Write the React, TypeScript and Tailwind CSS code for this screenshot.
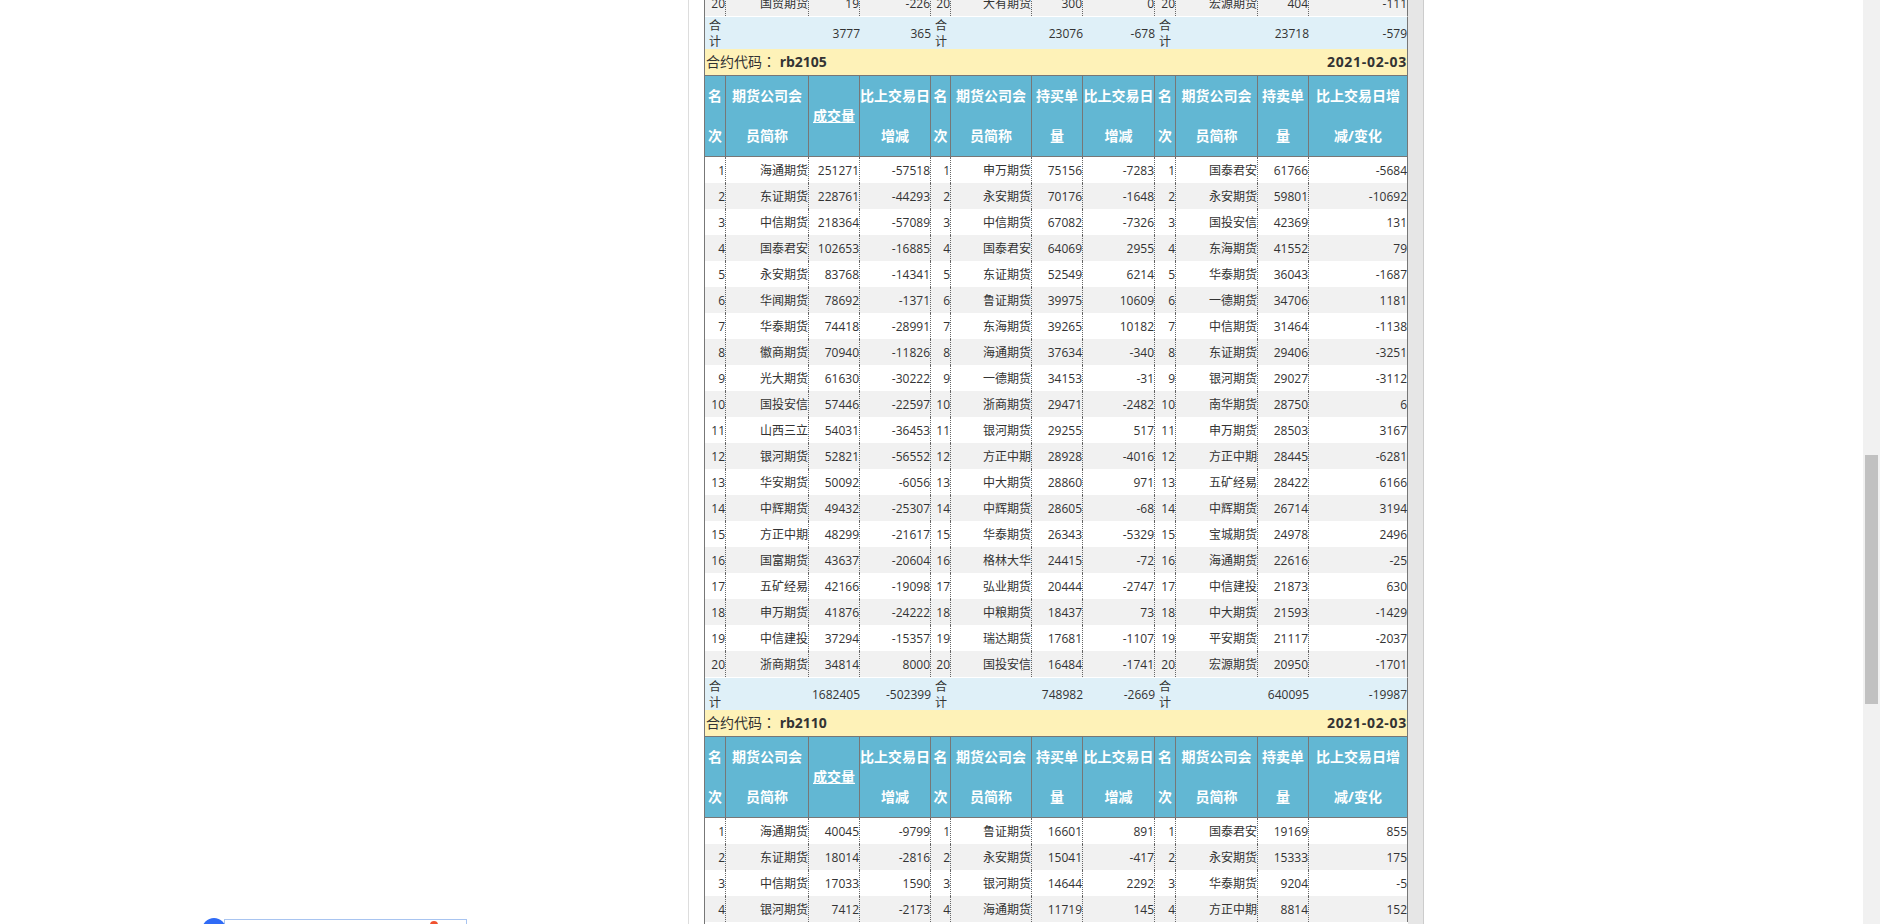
const headers = [
  ["名", "次"],
  ["期货公司会", "员简称"],
  ["成交量"],
  ["比上交易日", "增减"],
  ["名", "次"],
  ["期货公司会", "员简称"],
  ["持买单", "量"],
  ["比上交易日", "增减"],
  ["名", "次"],
  ["期货公司会", "员简称"],
  ["持卖单", "量"],
  ["比上交易日增", "减/变化"],
];

const cols = [21, 83, 51, 71, 20, 81, 51, 72, 21, 82, 51, 99];

const rb2105 = [
  "海通期货 251271 -57518 申万期货 75156 -7283 国泰君安 61766 -5684",
  "东证期货 228761 -44293 永安期货 70176 -1648 永安期货 59801 -10692",
  "中信期货 218364 -57089 中信期货 67082 -7326 国投安信 42369 131",
  "国泰君安 102653 -16885 国泰君安 64069 2955 东海期货 41552 79",
  "永安期货 83768 -14341 东证期货 52549 6214 华泰期货 36043 -1687",
  "华闻期货 78692 -1371 鲁证期货 39975 10609 一德期货 34706 1181",
  "华泰期货 74418 -28991 东海期货 39265 10182 中信期货 31464 -1138",
  "徽商期货 70940 -11826 海通期货 37634 -340 东证期货 29406 -3251",
  "光大期货 61630 -30222 一德期货 34153 -31 银河期货 29027 -3112",
  "国投安信 57446 -22597 浙商期货 29471 -2482 南华期货 28750 6",
  "山西三立 54031 -36453 银河期货 29255 517 申万期货 28503 3167",
  "银河期货 52821 -56552 方正中期 28928 -4016 方正中期 28445 -6281",
  "华安期货 50092 -6056 中大期货 28860 971 五矿经易 28422 6166",
  "中辉期货 49432 -25307 中辉期货 28605 -68 中辉期货 26714 3194",
  "方正中期 48299 -21617 华泰期货 26343 -5329 宝城期货 24978 2496",
  "国富期货 43637 -20604 格林大华 24415 -72 海通期货 22616 -25",
  "五矿经易 42166 -19098 弘业期货 20444 -2747 中信建投 21873 630",
  "申万期货 41876 -24222 中粮期货 18437 73 中大期货 21593 -1429",
  "中信建投 37294 -15357 瑞达期货 17681 -1107 平安期货 21117 -2037",
  "浙商期货 34814 8000 国投安信 16484 -1741 宏源期货 20950 -1701",
];

const rb2110 = [
  "海通期货 40045 -9799 鲁证期货 16601 891 国泰君安 19169 855",
  "东证期货 18014 -2816 永安期货 15041 -417 永安期货 15333 175",
  "中信期货 17033 1590 银河期货 14644 2292 华泰期货 9204 -5",
  "银河期货 7412 -2173 海通期货 11719 145 方正中期 8814 152",
];

function Row({ no, line }: { no: number; line: string }) {
  const v = line.split(" ");
  const cells = [no, v[0], v[1], v[2], no, v[3], v[4], v[5], no, v[6], v[7], v[8]];
  return (
    <tr className={no % 2 === 0 ? "bg-[#f1f1f1]" : "bg-white"}>
      {cells.map((c, i) => (
        <td
          key={i}
          className={
            i === 11
              ? "h-[26px] p-0 pt-[1px] text-right border-r border-solid border-[#777777]"
              : "h-[26px] p-0 pt-[1px] text-right border-r border-dotted border-[#666666]"
          }
        >
          {c}
        </td>
      ))}
    </tr>
  );
}

function Total({ values }: { values: string[] }) {
  const Label = () => (
    <td className="p-0 pl-[4px] pt-[1px] text-left leading-[15.5px] border-t border-white">合计</td>
  );
  const Num = ({ v }: { v: string }) => (
    <td className="p-0 pt-[1px] text-right border-t border-white">{v}</td>
  );
  return (
    <tr className="bg-[#dff0f8] h-[33px]">
      <Label />
      <td className="p-0 border-t border-white" />
      <Num v={values[0]} />
      <Num v={values[1]} />
      <Label />
      <td className="p-0 border-t border-white" />
      <Num v={values[2]} />
      <Num v={values[3]} />
      <Label />
      <td className="p-0 border-t border-white" />
      <Num v={values[4]} />
      <td className="p-0 pt-[1px] text-right border-t border-t-white border-r border-r-[#777777]">{values[5]}</td>
    </tr>
  );
}

function Title({ code }: { code: string }) {
  return (
    <tr className="bg-[#fef2b8] h-[26px]">
      <td colSpan={12} className="p-0 border-r border-[#777777]">
        <div className="flex justify-between pl-[1px] pb-[2px] text-[14px]">
          <span>
            合约代码<span className="font-['Noto_Sans_CJK_TC']">：</span> <b>{code}</b>
          </span>
          <b className="tracking-[0.7px]">2021-02-03</b>
        </div>
      </td>
    </tr>
  );
}

function Head() {
  return (
    <tr className="bg-[#62b7d3] text-white text-[14px] leading-[40px]">
      {headers.map((h, i) => (
        <th
          key={i}
          className="h-[82px] p-0 font-bold text-center border-y border-r border-[#777777]"
        >
          <span className={h.length === 1 ? "underline" : ""}>
            {h.map((t, j) => (
              <span key={j} className="block">
                {t}
              </span>
            ))}
          </span>
        </th>
      ))}
    </tr>
  );
}

export default function App() {
  return (
    <div className="relative flex h-screen overflow-hidden bg-white font-['Open_Sans','Noto_Sans_CJK_SC',sans-serif] text-[12px] text-[#333333]">
      <div className="flex-1 overflow-hidden pl-[688px]">
        <div className="flex w-[736px] border-x border-l-[#dddddd] border-r-[#cccccc] -mt-[10px] h-[944px]">
          <div className="w-[15px] bg-white" />
          <div className="w-[704px] border-l border-[#777777]">
            <table className="w-[703px] table-fixed border-separate border-spacing-0">
              <colgroup>
                {cols.map((w, i) => (
                  <col key={i} style={{ width: w }} />
                ))}
              </colgroup>
              <tbody>
                <Row no={20} line="国贸期货 19 -226 大有期货 300 0 宏源期货 404 -111" />
                <Total values={["3777", "365", "23076", "-678", "23718", "-579"]} />
                <Title code="rb2105" />
                <Head />
                {rb2105.map((line, i) => (
                  <Row key={i} no={i + 1} line={line} />
                ))}
                <Total values={["1682405", "-502399", "748982", "-2669", "640095", "-19987"]} />
                <Title code="rb2110" />
                <Head />
                {rb2110.map((line, i) => (
                  <Row key={i} no={i + 1} line={line} />
                ))}
              </tbody>
            </table>
          </div>
          <div className="w-[15px] bg-[#e6e6e6]" />
        </div>
      </div>
      <div className="w-[17px] bg-[#f1f1f1] pt-[455px] px-[2px]">
        <div className="h-[249px] bg-[#c1c1c1]" />
      </div>
      {/* floating widget stuck at the bottom left */}
      <div className="absolute left-[224px] top-[919px] w-[243px] h-[20px] border border-[#a8c4f0] bg-white" />
      <div className="absolute left-[202px] top-[918px] w-[24px] h-[24px] rounded-full bg-[#2f6bf6]" />
      <div className="absolute left-[430px] top-[921px] w-[8px] h-[8px] rounded-full bg-[#f0512f]" />
    </div>
  );
}
